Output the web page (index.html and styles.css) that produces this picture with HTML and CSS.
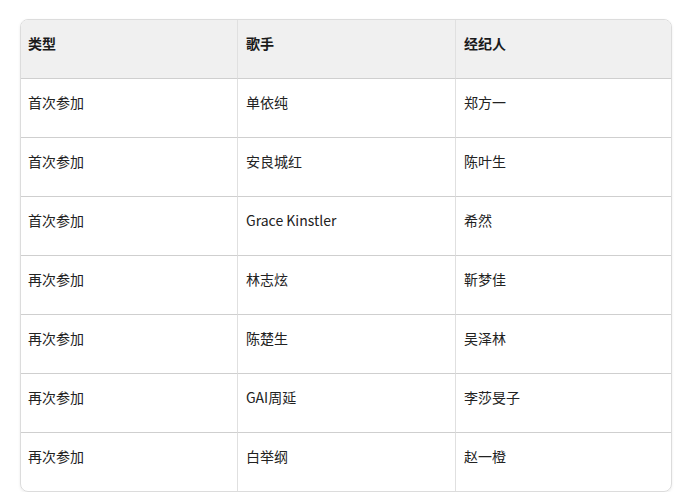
FILE: index.html
```html
<!DOCTYPE html>
<html lang="zh">
<head>
<meta charset="utf-8">
<link rel="stylesheet" href="styles.css">
</head>
<body>
<div class="wrap">
<table class="grid">
<colgroup><col class="c1"><col class="c2"><col class="c3"></colgroup>
<thead>
<tr><th>类型</th><th>歌手</th><th>经纪人</th></tr>
</thead>
<tbody>
<tr><td>首次参加</td><td>单依纯</td><td>郑方一</td></tr>
<tr><td>首次参加</td><td>安良城红</td><td>陈叶生</td></tr>
<tr><td>首次参加</td><td>Grace Kinstler</td><td>希然</td></tr>
<tr><td>再次参加</td><td>林志炫</td><td>靳梦佳</td></tr>
<tr><td>再次参加</td><td>陈楚生</td><td>吴泽林</td></tr>
<tr><td>再次参加</td><td>GAI周延</td><td>李莎旻子</td></tr>
<tr><td>再次参加</td><td>白举纲</td><td>赵一橙</td></tr>
</tbody>
</table>
</div>
</body>
</html>
```
FILE: styles.css
```css
html, body {
  margin: 0;
  padding: 0;
  background: #ffffff;
}
.wrap {
  padding: 19px 18px 0 20px;
}
.grid {
  width: 652px;
  border-collapse: separate;
  border-spacing: 0;
  border: 1px solid #dcdcdc;
  border-radius: 8px;
  overflow: hidden;
  box-shadow: 0 1px 3px rgba(0,0,0,0.08);
  font-family: "Noto Sans CJK SC", "Noto Sans", sans-serif;
  font-size: 14px;
  color: #222222;
  table-layout: fixed;
}
.c1 { width: 216px; }
.c2 { width: 218px; }
.grid th, .grid td {
  text-align: left;
  vertical-align: top;
  padding: 14px 8px 0 7px;
  height: 44px;
  line-height: 18px;
  border-bottom: 1px solid #cfcfcf;
}
.grid th + th, .grid td + td {
  border-left: 1px solid #e0e0e0;
  padding-left: 8px;
}
.grid th {
  background: #f0f0f0;
  font-weight: 700;
  color: #1a1a1a;
}
.grid tbody tr:last-child td {
  border-bottom: none;
}
```
